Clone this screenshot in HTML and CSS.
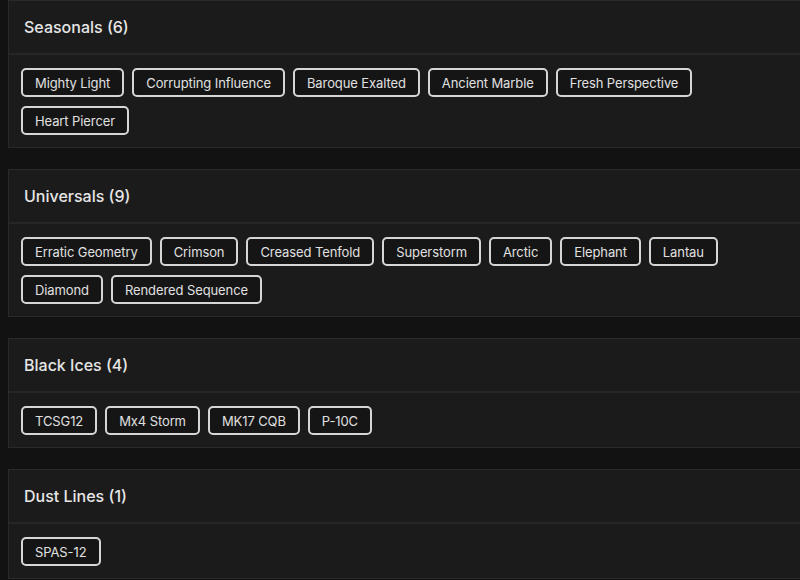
FILE: index.html
```html
<!DOCTYPE html>
<html>
<head>
<meta charset="utf-8">
<link rel="stylesheet" href="styles.css">
</head>
<body>
<div class="page">
  <section class="card">
    <div class="card-head">Seasonals (6)</div>
    <div class="card-body">
      <span class="chip">Mighty Light</span>
      <span class="chip">Corrupting Influence</span>
      <span class="chip">Baroque Exalted</span>
      <span class="chip">Ancient Marble</span>
      <span class="chip">Fresh Perspective</span>
      <span class="chip">Heart Piercer</span>
    </div>
  </section>
  <section class="card">
    <div class="card-head">Universals (9)</div>
    <div class="card-body">
      <span class="chip">Erratic Geometry</span>
      <span class="chip">Crimson</span>
      <span class="chip">Creased Tenfold</span>
      <span class="chip">Superstorm</span>
      <span class="chip">Arctic</span>
      <span class="chip">Elephant</span>
      <span class="chip">Lantau</span>
      <span class="chip">Diamond</span>
      <span class="chip">Rendered Sequence</span>
    </div>
  </section>
  <section class="card">
    <div class="card-head">Black Ices (4)</div>
    <div class="card-body">
      <span class="chip">TCSG12</span>
      <span class="chip">Mx4 Storm</span>
      <span class="chip">MK17 CQB</span>
      <span class="chip">P-10C</span>
    </div>
  </section>
  <section class="card">
    <div class="card-head">Dust Lines (1)</div>
    <div class="card-body">
      <span class="chip">SPAS-12</span>
    </div>
  </section>
</div>
</body>
</html>
```

FILE: styles.css
```css
html, body {
  margin: 0;
  padding: 0;
  background: #121212;
  overflow: hidden;
}
body {
  font-family: "Inter", "Liberation Sans", sans-serif;
  color: #e2e2e2;
}
.page {
  display: flex;
  flex-direction: column;
  gap: 21px;
  padding: 0 0 0 8px;
  width: 830px;
}
.card {
  background: #1b1b1b;
  border: 1px solid #2a2a2a;
}
.card-head {
  height: 52px;
  display: flex;
  align-items: center;
  padding-left: 15px;
  font-size: 16px;
  font-weight: 500;
  color: #e6e6e6;
  border-bottom: 2px solid #262626;
}
.card-body {
  display: flex;
  flex-wrap: wrap;
  gap: 9px 8px;
  padding: 13px 12px 12px 12px;
  width: 770px;
}
.chip {
  display: inline-flex;
  align-items: center;
  height: 29px;
  box-sizing: border-box;
  padding: 0 12px;
  border: 2px solid #d6d6d6;
  border-radius: 5px;
  background: #151515;
  font-size: 13px;
  letter-spacing: -0.1px;
  color: #e0e0e0;
}
```
